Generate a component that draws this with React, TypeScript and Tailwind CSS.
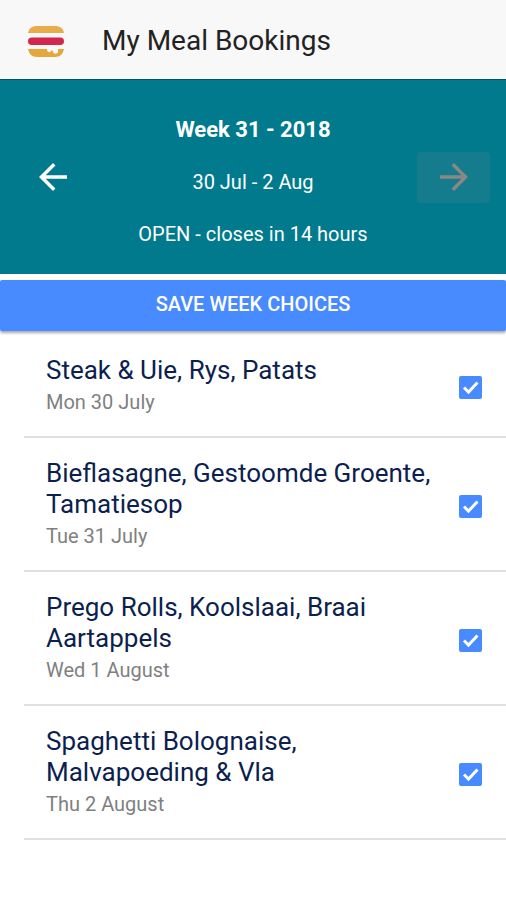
import { useState } from 'react'
import { MdArrowBack, MdArrowForward } from 'react-icons/md'

const meals = [
  { id: 'mon', title: 'Steak & Uie, Rys, Patats', date: 'Mon 30 July' },
  { id: 'tue', title: 'Bieflasagne, Gestoomde Groente, Tamatiesop', date: 'Tue 31 July' },
  { id: 'wed', title: 'Prego Rolls, Koolslaai, Braai Aartappels', date: 'Wed 1 August' },
  { id: 'thu', title: 'Spaghetti Bolognaise, Malvapoeding & Vla', date: 'Thu 2 August' },
]

function BurgerIcon() {
  return (
    <svg viewBox="0 0 36 32" className="w-9 h-8" aria-hidden="true">
      <path d="M0 8C1 3 4 1 9 1h18c5 0 8 2 9 7z" fill="#e8ad49" />
      <rect y="12.5" width="36" height="7.5" rx="3.75" fill="#d2264f" />
      <path
        d="M0 24h19c0 4 4 4 4 1.500 1 0 2 0 2 1 0 3 5 3 5 0V24h6c-1 5-4 8-9 8H9c-5 0-8-3-9-8z"
        fill="#e5a63a"
      />
    </svg>
  )
}

function Header() {
  return (
    <header className="flex items-center gap-5 h-20 pl-7 pt-0.5 bg-[#f8f8f8] border-b border-[#0a4f5c]">
      <button type="button" aria-label="Menu" className="w-[54px]">
        <BurgerIcon />
      </button>
      <h1 className="text-[28px] leading-9 text-[#222222]">My Meal Bookings</h1>
    </header>
  )
}

function WeekPicker() {
  return (
    <section className="flex items-center justify-between px-4 bg-[#007a8c] text-white">
      <button
        type="button"
        aria-label="Previous week"
        className="flex items-center justify-center w-[73px] h-[51px]"
      >
        <MdArrowBack size={42} />
      </button>
      <div className="flex flex-col gap-6 pt-9 pb-[26px] text-center text-xl leading-7">
        <h2 className="text-[22px] leading-7 font-bold">Week 31 - 2018</h2>
        <p>30 Jul - 2 Aug</p>
        <p>OPEN - closes in 14 hours</p>
      </div>
      <button
        type="button"
        disabled
        aria-label="Next week"
        className="flex items-center justify-center w-[73px] h-[51px] rounded-sm bg-[#147c8d] text-[#8a8784]"
      >
        <MdArrowForward size={42} />
      </button>
    </section>
  )
}

interface MealRowProps {
  id: string
  title: string
  date: string
}

function MealRow({ id, title, date }: MealRowProps) {
  const [checked, setChecked] = useState(true)

  return (
    <li className="flex items-center ml-6 pl-[22px] pr-6 pt-1 border-b-2 border-[#e0e0e0]">
      <label htmlFor={id} className="flex-1 pt-4 pb-[22px] pr-4">
        <span className="block text-[26px] leading-[31px] text-[#0c1f4f]">{title}</span>
        <span className="block mt-1 text-xl leading-6 text-[#808080]">{date}</span>
      </label>
      <span className="relative w-[23px] h-[23px]">
        <input
          id={id}
          type="checkbox"
          checked={checked}
          onChange={(e) => setChecked(e.target.checked)}
          className="block w-full h-full appearance-none rounded-xs border-2 border-[#488aff] checked:bg-[#488aff]"
        />
        {checked && (
          <svg
            viewBox="0 0 23 23"
            className="absolute inset-0 pointer-events-none"
            fill="none"
            stroke="white"
            strokeWidth="3"
            aria-hidden="true"
          >
            <path d="M5 11.500L9.500 16L18.500 6.500" />
          </svg>
        )}
      </span>
    </li>
  )
}

export default function App() {
  return (
    <div className="min-h-screen bg-white font-[Roboto,sans-serif]">
      <Header />
      <main>
        <WeekPicker />
        <button
          type="button"
          className="w-full h-[51px] mt-1.5 pb-1 rounded-xs bg-[#488aff] text-xl font-medium text-white shadow-[0_2px_3px_rgba(0,0,0,0.35)]"
        >
          SAVE WEEK CHOICES
        </button>
        <ul className="pt-1">
          {meals.map((meal) => (
            <MealRow key={meal.id} {...meal} />
          ))}
        </ul>
      </main>
    </div>
  )
}
